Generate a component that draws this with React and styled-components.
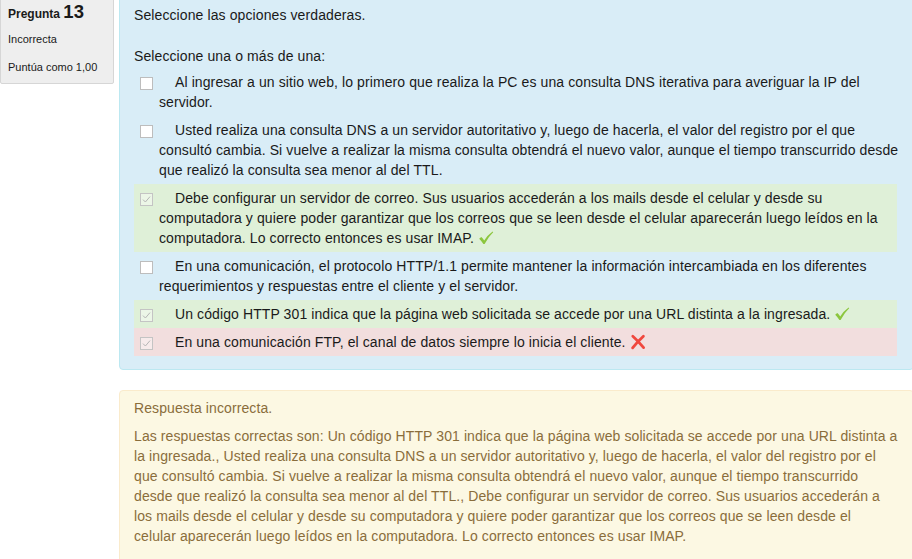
import React from "react";
import styled, { createGlobalStyle } from "styled-components";

const GlobalStyle = createGlobalStyle`
  html, body {
    margin: 0;
    padding: 0;
    background: #fff;
    overflow: hidden;
  }
  body {
    font-family: "Liberation Sans", Arial, sans-serif;
    font-size: 14px;
    line-height: 20px;
    letter-spacing: 0.1px;
    color: #333;
  }
`;

const Page = styled.div`
  display: flex;
  align-items: flex-start;
  gap: 5px;
  width: 914px;
  margin-top: -4px;
`;

const InfoBox = styled.div`
  width: 114px;
  flex: none;
  box-sizing: border-box;
  background-color: #eeeeee;
  border: 1px solid #d6d6d6;
  border-radius: 2px;
  padding: 6px 7px 8px 7px;
  color: #1a1a1a;
  letter-spacing: 0;
`;

const QNo = styled.h3`
  margin: 0;
  font-size: 12px;
  font-weight: bold;
  line-height: 20px;
`;

const QNumber = styled.span`
  font-size: 18.5px;
  line-height: 1;
`;

const InfoLine = styled.div`
  font-size: 11px;
  line-height: 16px;
  margin-top: ${(p) => p.$gap}px;
`;

const Content = styled.div`
  flex: 1;
  display: flex;
  flex-direction: column;
  gap: 20px;
`;

const Formulation = styled.div`
  background-color: #d9edf7;
  border: 1px solid #bce8f1;
  border-radius: 4px;
  padding: 8px 16px 13px 14px;
  color: #1a1a1a;
`;

const QText = styled.div``;

const Prompt = styled.div`
  margin-top: 21px;
`;

const Answers = styled.div`
  margin-top: 2px;
  display: flex;
  flex-direction: column;
`;

const bgFor = {
  none: "transparent",
  correct: "#dff0d8",
  incorrect: "#f2dede",
};

const Row = styled.div`
  padding: 4px 0 4px 25px;
  background-color: ${(p) => bgFor[p.$state]};
`;

/* the label text runs a little past the row's coloured band, as in the original */
const Label = styled.div`
  text-indent: -19px;
  margin-right: -10px;
`;

const Box = styled.span`
  display: inline-block;
  box-sizing: border-box;
  width: 13px;
  height: 13px;
  margin-right: 22px;
  vertical-align: -3px;
  text-indent: 0;
  border: 1px solid ${(p) => (p.$checked ? "#c4c4c4" : "#bdbdbd")};
  background-color: ${(p) => (p.$checked ? "rgba(255,255,255,0.4)" : "#fff")};
  position: relative;

  svg {
    position: absolute;
    left: 1px;
    top: 1px;
  }
`;

const Mark = styled.svg`
  vertical-align: -3px;
  margin-left: 4px;
`;

const Feedback = styled.div`
  background-color: #fcf8e3;
  border: 1px solid #faebcc;
  border-radius: 4px;
  padding: 7px 15.5px 30px 14px;
  color: #8a6d3b;
`;

const RightAnswer = styled.div`
  margin-top: 8px;
`;

function Checkbox({ checked }) {
  return (
    <Box $checked={checked}>
      {checked && (
        <svg width="9" height="9" viewBox="0 0 9 9">
          <path d="M1 4.6 L3.4 7 L8 1.6" fill="none" stroke="#b5b5b5" strokeWidth="1" />
        </svg>
      )}
    </Box>
  );
}

function CorrectMark() {
  return (
    <Mark width="16" height="16" viewBox="0 0 16 16">
      <path
        d="M1.2 8.8 Q2.4 7.6 3.3 7.1 Q4.9 8.4 6.2 10.4 Q9.6 5.2 14.6 1.6 L15.2 2.3 Q10.4 6.8 6.6 14 Q5.9 14.2 5.4 14 Q3.6 11.2 1.2 8.8 Z"
        fill="#8cc63e"
      />
    </Mark>
  );
}

function IncorrectMark() {
  return (
    <Mark width="16" height="16" viewBox="0 0 16 16">
      <path
        d="M2.8 2.2 Q8 6.8 13.6 13.6 M13.4 2.2 Q7.6 7.6 2.6 13.8"
        fill="none"
        stroke="#f0483e"
        strokeWidth="2.8"
        strokeLinecap="round"
      />
    </Mark>
  );
}

const answers = [
  {
    text: "Al ingresar a un sitio web, lo primero que realiza la PC es una consulta DNS iterativa para averiguar la IP del servidor.",
    checked: false,
    state: "none",
  },
  {
    text: "Usted realiza una consulta DNS a un servidor autoritativo y, luego de hacerla, el valor del registro por el que consultó cambia. Si vuelve a realizar la misma consulta obtendrá el nuevo valor, aunque el tiempo transcurrido desde que realizó la consulta sea menor al del TTL.",
    checked: false,
    state: "none",
  },
  {
    text: "Debe configurar un servidor de correo. Sus usuarios accederán a los mails desde el celular y desde su computadora y quiere poder garantizar que los correos que se leen desde el celular aparecerán luego leídos en la computadora. Lo correcto entonces es usar IMAP.",
    checked: true,
    state: "correct",
  },
  {
    text: "En una comunicación, el protocolo HTTP/1.1 permite mantener la información intercambiada en los diferentes requerimientos y respuestas entre el cliente y el servidor.",
    checked: false,
    state: "none",
  },
  {
    text: "Un código HTTP 301 indica que la página web solicitada se accede por una URL distinta a la ingresada.",
    checked: true,
    state: "correct",
  },
  {
    text: "En una comunicación FTP, el canal de datos siempre lo inicia el cliente.",
    checked: true,
    state: "incorrect",
  },
];

// the non-breaking space keeps the wrap where the original browser put it
const rightAnswer =
  "Las respuestas correctas son: Un código HTTP 301 indica que la página web solicitada se accede por una URL distinta a la ingresada., Usted realiza una consulta DNS a un servidor autoritativo y, luego de hacerla, el valor del registro por el que consultó cambia. Si vuelve a realizar la misma consulta obtendrá el nuevo valor, aunque el tiempo transcurrido desde que realizó la consulta sea menor al del TTL., Debe configurar un servidor de correo. Sus usuarios accederán a los mails desde el celular y desde su computadora y quiere poder garantizar que los correos que se leen desde el celular\u00a0aparecerán luego leídos en la computadora. Lo correcto entonces es usar IMAP.";

export default function App() {
  return (
    <>
      <GlobalStyle />
      <Page>
        <InfoBox>
          <QNo>
            Pregunta <QNumber>13</QNumber>
          </QNo>
          <InfoLine $gap={7}>Incorrecta</InfoLine>
          <InfoLine $gap={12}>Puntúa como 1,00</InfoLine>
        </InfoBox>
        <Content>
          <Formulation>
            <QText>Seleccione las opciones verdaderas.</QText>
            <Prompt>Seleccione una o más de una:</Prompt>
            <Answers>
              {answers.map((a, i) => (
                <Row key={i} $state={a.state}>
                  <Label>
                    <Checkbox checked={a.checked} />
                    {a.text}
                    {a.state === "correct" && <CorrectMark />}
                    {a.state === "incorrect" && <IncorrectMark />}
                  </Label>
                </Row>
              ))}
            </Answers>
          </Formulation>
          <Feedback>
            <div>Respuesta incorrecta.</div>
            <RightAnswer>{rightAnswer}</RightAnswer>
          </Feedback>
        </Content>
      </Page>
    </>
  );
}
